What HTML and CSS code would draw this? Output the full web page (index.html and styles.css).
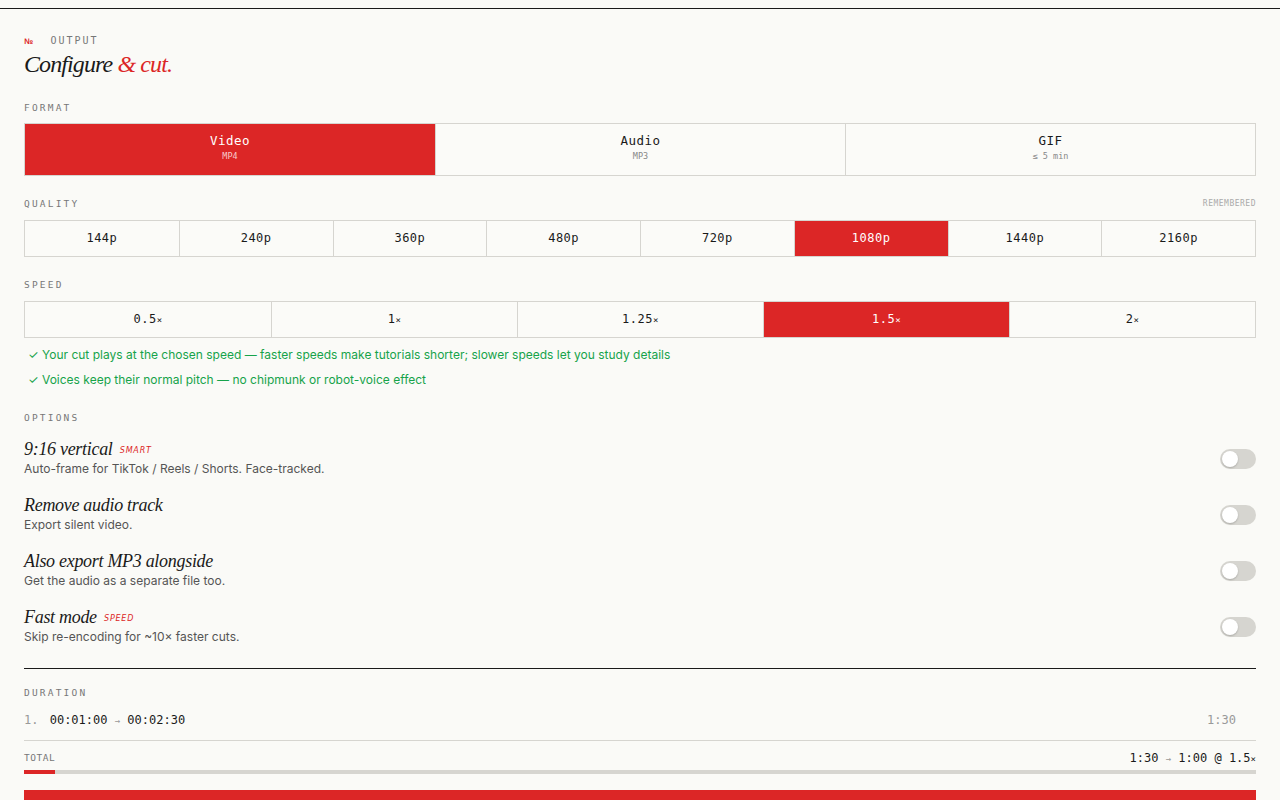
FILE: index.html
```html
<!DOCTYPE html>
<html lang="en">
<head>
    <meta charset="UTF-8">
    <meta name="viewport" content="width=device-width, initial-scale=1.0">
    <title>Configure &amp; cut</title>
    <link rel="stylesheet" href="styles.css">
</head>
<body>
    <div class="panel">
        <div class="eyebrow"><span class="numero">№</span> OUTPUT</div>
        <h1 class="title">Configure <em>&amp; cut.</em></h1>

        <div class="label label-format">FORMAT</div>
        <div class="seg seg-3 seg-tall">
            <button class="seg-item active"><span class="seg-main">Video</span><span class="seg-sub">MP4</span></button>
            <button class="seg-item"><span class="seg-main">Audio</span><span class="seg-sub">MP3</span></button>
            <button class="seg-item"><span class="seg-main">GIF</span><span class="seg-sub">≤ 5 min</span></button>
        </div>

        <div class="label label-row"><span>QUALITY</span><span class="hint">REMEMBERED</span></div>
        <div class="seg seg-8">
            <button class="seg-item">144p</button>
            <button class="seg-item">240p</button>
            <button class="seg-item">360p</button>
            <button class="seg-item">480p</button>
            <button class="seg-item">720p</button>
            <button class="seg-item active">1080p</button>
            <button class="seg-item">1440p</button>
            <button class="seg-item">2160p</button>
        </div>

        <div class="label">SPEED</div>
        <div class="seg seg-5">
            <button class="seg-item">0.5<small>×</small></button>
            <button class="seg-item">1<small>×</small></button>
            <button class="seg-item">1.25<small>×</small></button>
            <button class="seg-item active">1.5<small>×</small></button>
            <button class="seg-item">2<small>×</small></button>
        </div>
        <ul class="notes">
            <li>✓ Your cut plays at the chosen speed — faster speeds make tutorials shorter; slower speeds let you study details</li>
            <li>✓ Voices keep their normal pitch — no chipmunk or robot-voice effect</li>
        </ul>

        <div class="label label-options">OPTIONS</div>
        <div class="options">
            <div class="option">
                <div>
                    <div class="option-title">9:16 vertical <span class="tag">SMART</span></div>
                    <div class="option-desc">Auto-frame for TikTok / Reels / Shorts. Face-tracked.</div>
                </div>
                <span class="toggle"></span>
            </div>
            <div class="option">
                <div>
                    <div class="option-title">Remove audio track</div>
                    <div class="option-desc">Export silent video.</div>
                </div>
                <span class="toggle"></span>
            </div>
            <div class="option">
                <div>
                    <div class="option-title">Also export MP3 alongside</div>
                    <div class="option-desc">Get the audio as a separate file too.</div>
                </div>
                <span class="toggle"></span>
            </div>
            <div class="option">
                <div>
                    <div class="option-title">Fast mode <span class="tag">SPEED</span></div>
                    <div class="option-desc">Skip re-encoding for ~10× faster cuts.</div>
                </div>
                <span class="toggle"></span>
            </div>
        </div>

        <div class="duration">
            <div class="label">DURATION</div>
            <div class="clip">
                <span><span class="idx">1.</span> 00:01:00 <span class="arrow">→</span> 00:02:30</span>
                <span class="len">1:30</span>
            </div>
            <div class="total">
                <span class="label">TOTAL</span>
                <span class="total-val">1:30 <span class="arrow">→</span> 1:00 @ 1.5<small>×</small></span>
            </div>
            <div class="bar"><div class="bar-fill" style="width: 2.5%"></div></div>
        </div>

        <button class="cta">Cut</button>
    </div>
</body>
</html>
```

FILE: styles.css
```css
body {
    margin: 0;
    background-color: #fafaf7;
    color: #1a1a1a;
    font-family: Inter, "Liberation Sans", sans-serif;
}
.panel {
    margin-top: 8px;
    border-top: 1px solid #1a1a1a;
    padding: 26px 24px 0;
}
.eyebrow {
    font-family: "DejaVu Sans Mono", monospace;
    font-size: 10px;
    letter-spacing: 2px;
    color: #777;
    line-height: 12px;
}
.numero {
    color: #dc2626;
    font-family: "Liberation Sans", sans-serif;
    font-size: 8px;
    letter-spacing: -0.5px;
    margin-right: 10px;
    font-weight: bold;
}
.title {
    font-family: "Liberation Serif", serif;
    font-style: italic;
    font-weight: normal;
    font-size: 24px;
    letter-spacing: -0.9px;
    margin: 2px 0 0;
    line-height: 28px;
}
.title em {
    color: #dc2626;
}
.label {
    font-family: "DejaVu Sans Mono", monospace;
    font-size: 9.5px;
    letter-spacing: 2.2px;
    color: #777;
    line-height: 12px;
    margin: 22px 0 10px;
}
.label-format {
    margin-top: 24px;
}
.label-row {
    display: flex;
    justify-content: space-between;
    margin-top: 22px;
}
.hint {
    font-size: 8px;
    letter-spacing: 0.5px;
    color: #aaa;
}
.seg {
    display: grid;
    border: 1px solid #d6d5d0;
    background: #fff;
}
.seg-3 { grid-template-columns: repeat(3, 1fr); }
.seg-5 { grid-template-columns: repeat(5, 1fr); }
.seg-8 { grid-template-columns: repeat(8, 1fr); }
.seg-item {
    font-family: "DejaVu Sans Mono", monospace;
    font-size: 12px;
    color: #1a1a1a;
    background: #fbfbf8;
    border: none;
    border-left: 1px solid #d6d5d0;
    height: 35px;
    padding: 0 0 2px;
    letter-spacing: 0.5px;
}
.seg-item:first-child {
    border-left: none;
}
.seg-item small {
    font-size: 9px;
}
.seg-tall {
    margin-top: -1px;
}
.seg-tall .seg-item {
    height: 51px;
    display: flex;
    flex-direction: column;
    align-items: center;
    justify-content: center;
    gap: 3px;
    padding-bottom: 6px;
}
.seg-main {
    font-size: 12.5px;
}
.seg-sub {
    font-size: 8.5px;
    color: #888;
    letter-spacing: 0;
}
.seg-item.active {
    background: #dc2626;
    color: #fff;
}
.seg-item.active .seg-sub {
    color: #f8c9c9;
}
.notes {
    list-style: none;
    margin: 9px 0 0 4px;
    padding: 0;
    color: #16a34a;
    font-size: 12px;
}
.notes li {
    line-height: 16px;
    margin-bottom: 9px;
}
.label-options {
    margin-top: 24px;
    margin-bottom: 15px;
}
.options {
    display: flex;
    flex-direction: column;
    gap: 18px;
}
.option {
    display: flex;
    justify-content: space-between;
    align-items: center;
}
.option-title {
    font-family: "Liberation Serif", serif;
    font-style: italic;
    font-size: 18px;
    letter-spacing: -0.3px;
    line-height: 20px;
    height: 20px;
    margin-bottom: 2px;
}
.tag {
    font-family: "DejaVu Sans", sans-serif;
    font-style: italic;
    font-size: 8px;
    line-height: 0;
    color: #dc2626;
    letter-spacing: 0.8px;
    margin-left: 3px;
    vertical-align: 2px;
}
.option-desc {
    font-size: 12px;
    color: #555;
    line-height: 16px;
}
.toggle {
    width: 36px;
    height: 20px;
    border-radius: 10px;
    background: #d6d5d0;
    position: relative;
    margin-top: 2px;
}
.toggle::after {
    content: "";
    position: absolute;
    left: 2px;
    top: 2px;
    width: 16px;
    height: 16px;
    border-radius: 50%;
    background: #fff;
    box-shadow: 0 1px 2px rgba(0, 0, 0, 0.2);
}
.duration {
    margin-top: 23px;
    border-top: 1px solid #1a1a1a;
}
.duration .label {
    margin-top: 18px;
    margin-bottom: 9px;
}
.clip {
    display: flex;
    justify-content: space-between;
    font-family: "DejaVu Sans Mono", monospace;
    font-size: 12px;
    line-height: 24px;
    padding: 0 20px 7px 0;
    border-bottom: 1px solid #d6d5d0;
}
.idx, .len {
    color: #999;
}
.idx {
    margin-right: 4px;
}
.arrow {
    font-size: 9px;
    color: #999;
}
.total {
    display: flex;
    justify-content: space-between;
    align-items: center;
    margin-top: 10px;
}
.duration .total .label {
    margin: 0;
    letter-spacing: 0.5px;
}
.total-val {
    font-family: "DejaVu Sans Mono", monospace;
    font-size: 12px;
}
.total-val small {
    font-size: 9px;
}
.bar {
    height: 4px;
    background: #d6d5d0;
    margin-top: 5px;
}
.bar-fill {
    height: 100%;
    background: #dc2626;
}
.cta {
    display: block;
    width: 100%;
    height: 48px;
    margin-top: 16px;
    background: #dc2626;
    color: #fff;
    border: none;
    font-family: "DejaVu Sans Mono", monospace;
    font-size: 13px;
}
```
